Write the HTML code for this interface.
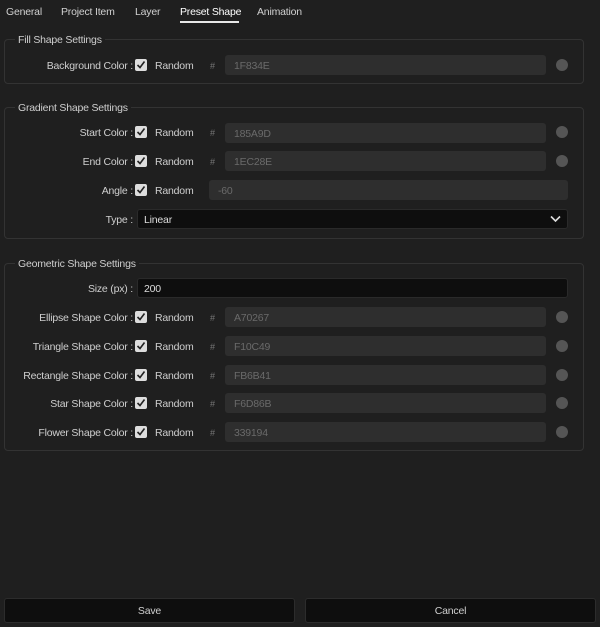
<!DOCTYPE html>
<html><head><meta charset="utf-8"><style>
*{box-sizing:border-box;margin:0;padding:0}
body{width:600px;height:627px;background:#1f1f1f;font-family:"Liberation Sans",sans-serif;font-size:10.5px;letter-spacing:-0.2px;color:#d4d4d4;position:relative;overflow:hidden}
.a{position:absolute;white-space:nowrap}
.tab{top:6px;font-size:10.5px;color:#d0d0d0}
.fs{position:absolute;left:4px;width:580px;border:1px solid #333;border-radius:4px}
.lg{position:absolute;left:10px;top:-6px;background:#1f1f1f;padding:0 3px;font-size:10.5px;color:#cfcfcf}
.lab{position:absolute;right:467px;text-align:right;white-space:nowrap;color:#cfcfcf;margin-top:1px}
.cb{position:absolute;left:135px;width:12px;height:12px;background:#ddd;border-radius:2px}
.cb svg{position:absolute;left:1px;top:1px}
.rnd{position:absolute;left:155px;color:#cfcfcf;margin-top:1px}
.hash{position:absolute;left:210px;color:#777;font-size:9px}
.in{position:absolute;left:225px;width:321px;height:20px;background:#2e2e2e;border-radius:3px;color:#6a6a6a;padding:5px 0 0 9px}
.dot{position:absolute;left:556px;width:12px;height:12px;border-radius:50%;background:#555}
.dk{position:absolute;left:137px;width:431px;height:20px;background:#0e0e0e;border:1px solid #2a2a2a;border-radius:3px;color:#ddd;padding:4px 0 0 6px}
.btn{position:absolute;top:598px;height:25px;background:#0e0e0e;border:1px solid #2c2c2c;border-radius:3px;text-align:center;line-height:24px;color:#cfcfcf}
</style></head><body>
<div class="a tab" style="left:6px">General</div>
<div class="a tab" style="left:61px">Project Item</div>
<div class="a tab" style="left:135px">Layer</div>
<div class="a tab" style="left:180px;color:#fff">Preset Shape</div>
<div class="a" style="left:180px;top:21px;width:59px;height:2px;background:#e8e8e8"></div>
<div class="a tab" style="left:257px">Animation</div>

<div class="fs" style="top:39px;height:45px"><div class="lg">Fill Shape Settings</div></div>
<div class="fs" style="top:107px;height:132px"><div class="lg">Gradient Shape Settings</div></div>
<div class="fs" style="top:263px;height:188px"><div class="lg">Geometric Shape Settings</div></div>

<div class="lab" style="top:59px">Background Color :</div>
<div class="cb" style="top:59px"><svg width="10" height="10"><path d="M1.5 5 L4 7.5 L8.5 1.5" stroke="#222" stroke-width="1.6" fill="none"/></svg></div>
<div class="rnd" style="top:59px">Random</div><div class="hash" style="top:61px">#</div>
<div class="in" style="top:55px">1F834E</div><div class="dot" style="top:59px"></div>

<div class="lab" style="top:126px">Start Color :</div>
<div class="cb" style="top:126px"><svg width="10" height="10"><path d="M1.5 5 L4 7.5 L8.5 1.5" stroke="#222" stroke-width="1.6" fill="none"/></svg></div>
<div class="rnd" style="top:126px">Random</div><div class="hash" style="top:128px">#</div>
<div class="in" style="top:123px">185A9D</div><div class="dot" style="top:126px"></div>

<div class="lab" style="top:155px">End Color :</div>
<div class="cb" style="top:155px"><svg width="10" height="10"><path d="M1.5 5 L4 7.5 L8.5 1.5" stroke="#222" stroke-width="1.6" fill="none"/></svg></div>
<div class="rnd" style="top:155px">Random</div><div class="hash" style="top:157px">#</div>
<div class="in" style="top:151px">1EC28E</div><div class="dot" style="top:155px"></div>

<div class="lab" style="top:184px">Angle :</div>
<div class="cb" style="top:184px"><svg width="10" height="10"><path d="M1.5 5 L4 7.5 L8.5 1.5" stroke="#222" stroke-width="1.6" fill="none"/></svg></div>
<div class="rnd" style="top:184px">Random</div>
<div class="in" style="top:180px;left:209px;width:359px">-60</div>

<div class="lab" style="top:213px">Type :</div>
<div class="dk" style="top:209px">Linear</div>
<svg class="a" style="left:550px;top:215px" width="11" height="8"><path d="M1 1.5 L5.5 6 L10 1.5" stroke="#ddd" stroke-width="1.6" fill="none"/></svg>

<div class="lab" style="top:282px">Size (px) :</div>
<div class="dk" style="top:278px">200</div>

<div class="lab" style="top:311px">Ellipse Shape Color :</div>
<div class="cb" style="top:311px"><svg width="10" height="10"><path d="M1.5 5 L4 7.5 L8.5 1.5" stroke="#222" stroke-width="1.6" fill="none"/></svg></div>
<div class="rnd" style="top:311px">Random</div><div class="hash" style="top:313px">#</div>
<div class="in" style="top:307px">A70267</div><div class="dot" style="top:311px"></div>

<div class="lab" style="top:340px">Triangle Shape Color :</div>
<div class="cb" style="top:340px"><svg width="10" height="10"><path d="M1.5 5 L4 7.5 L8.5 1.5" stroke="#222" stroke-width="1.6" fill="none"/></svg></div>
<div class="rnd" style="top:340px">Random</div><div class="hash" style="top:342px">#</div>
<div class="in" style="top:336px">F10C49</div><div class="dot" style="top:340px"></div>

<div class="lab" style="top:369px">Rectangle Shape Color :</div>
<div class="cb" style="top:369px"><svg width="10" height="10"><path d="M1.5 5 L4 7.5 L8.5 1.5" stroke="#222" stroke-width="1.6" fill="none"/></svg></div>
<div class="rnd" style="top:369px">Random</div><div class="hash" style="top:371px">#</div>
<div class="in" style="top:365px">FB6B41</div><div class="dot" style="top:369px"></div>

<div class="lab" style="top:397px">Star Shape Color :</div>
<div class="cb" style="top:397px"><svg width="10" height="10"><path d="M1.5 5 L4 7.5 L8.5 1.5" stroke="#222" stroke-width="1.6" fill="none"/></svg></div>
<div class="rnd" style="top:397px">Random</div><div class="hash" style="top:399px">#</div>
<div class="in" style="top:393px">F6D86B</div><div class="dot" style="top:397px"></div>

<div class="lab" style="top:426px">Flower Shape Color :</div>
<div class="cb" style="top:426px"><svg width="10" height="10"><path d="M1.5 5 L4 7.5 L8.5 1.5" stroke="#222" stroke-width="1.6" fill="none"/></svg></div>
<div class="rnd" style="top:426px">Random</div><div class="hash" style="top:428px">#</div>
<div class="in" style="top:422px">339194</div><div class="dot" style="top:426px"></div>

<div class="btn" style="left:4px;width:291px">Save</div>
<div class="btn" style="left:305px;width:291px">Cancel</div>
</body></html>
